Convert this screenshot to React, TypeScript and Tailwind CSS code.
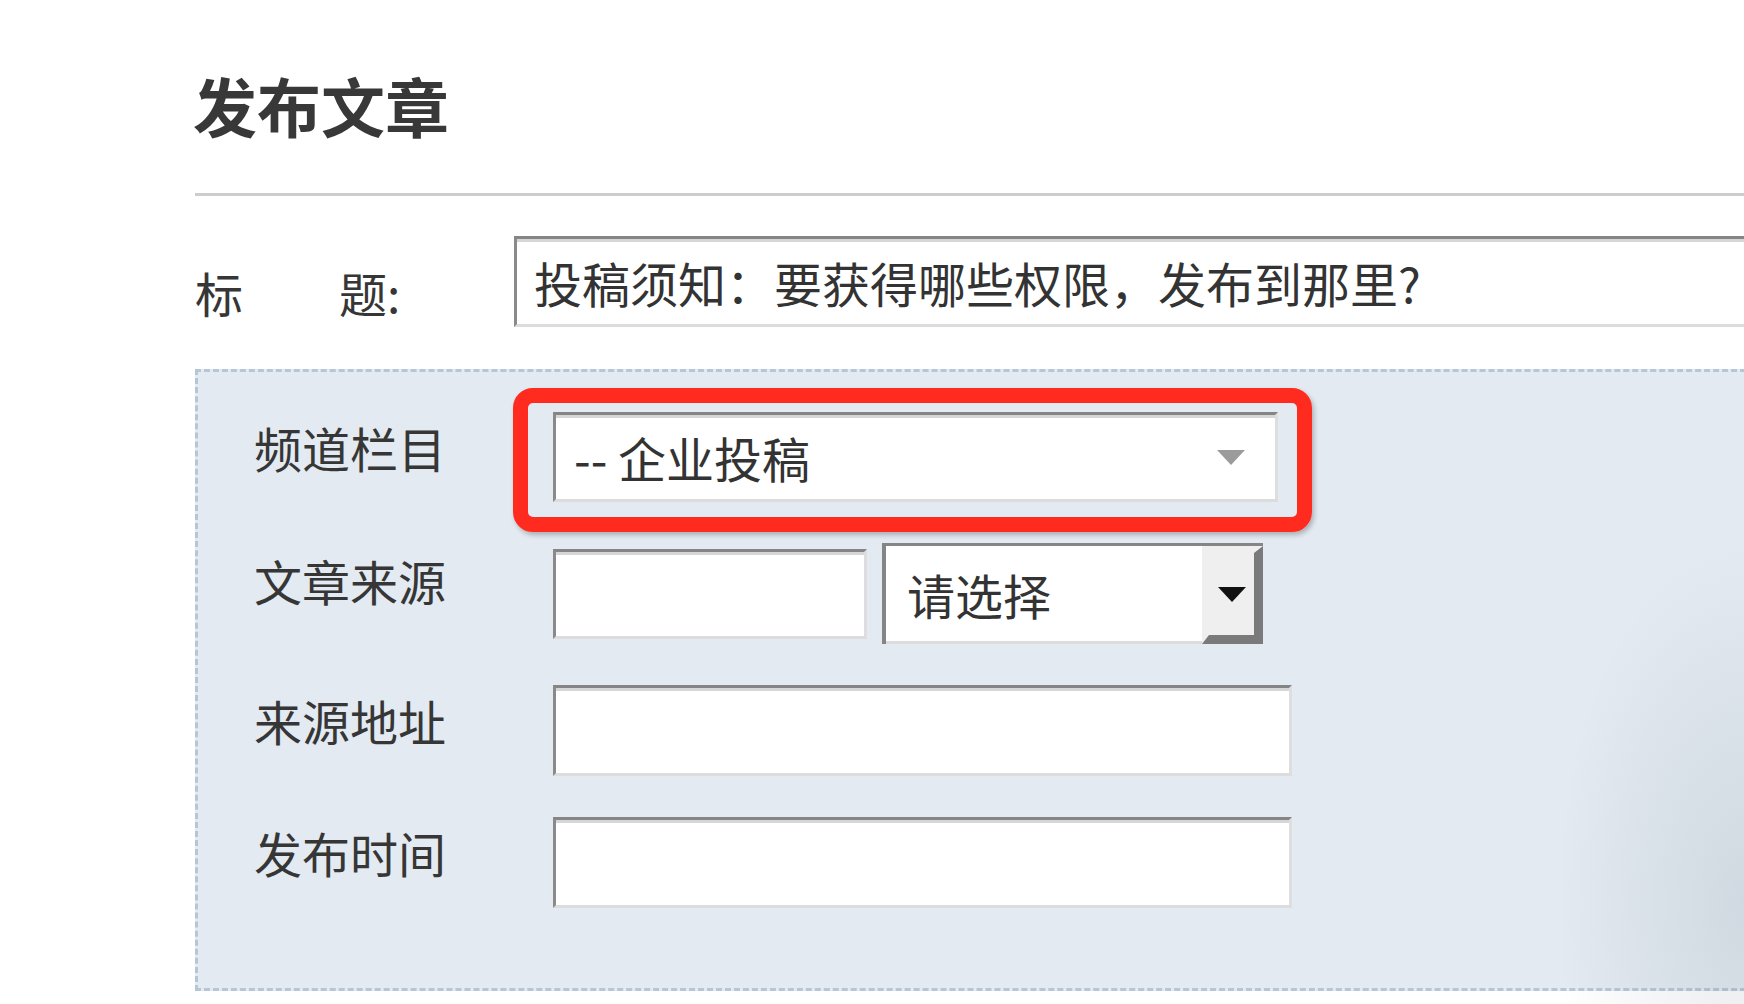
import React from 'react';

const fieldBorder =
  'border-t-[3px] border-t-[#858585] border-l-[3px] border-l-[#8a8a8a] border-r-[3px] border-r-[#dedede] border-b-[3px] border-b-[#dcdcdc] shadow-[inset_0_3px_0_#d6d6d6] bg-white';

function TextField({ className = '', children }: { className?: string; children?: React.ReactNode }) {
  return (
    <div className={`flex items-center ${fieldBorder} ${className}`}>
      {children}
    </div>
  );
}

function Label({ children, className = '' }: { children: React.ReactNode; className?: string }) {
  return (
    <div className={`text-[48px] leading-none text-[#363636] whitespace-nowrap ${className}`}>
      {children}
    </div>
  );
}

export default function App() {
  return (
    <div className="relative w-[1744px] h-[1004px] overflow-hidden bg-white font-['Noto_Sans_CJK_SC',sans-serif]">
      <div className="flex flex-col pl-[195px] pt-[72px]">
        {/* Heading */}
        <h1 className="text-[64px] leading-none font-bold text-[#383838] -ml-[2px]">发布文章</h1>
        <div className="mt-[57px] h-[3px] bg-[#cdcdcd]" />

        {/* Title row */}
        <div className="mt-[40px] flex items-start">
          <Label className="w-[319px] shrink-0 mt-[32px]">标　　题:</Label>
          <TextField className="flex-1 h-[91px] -mr-[20px] pl-[17px]">
            <span className="text-[48px] leading-none text-[#333]">投稿须知：要获得哪些权限，发布到那里?</span>
          </TextField>
        </div>

        {/* Dashed panel */}
        <div className="mt-[42px] -mr-[20px] border-[3px] border-dashed border-[#b6c6d6] bg-[#e3eaf1] pt-[40px] pb-[80px] pl-[56px] flex flex-col gap-[41px]">
          <div className="flex items-start">
            <Label className="w-[299px] shrink-0 mt-[11px]">频道栏目</Label>
            <div className="relative">
              <TextField className="w-[725px] h-[90px] pl-[18px] justify-between pr-[30px]">
                <span className="text-[48px] leading-none text-[#333]">-- 企业投稿</span>
                <svg width="28" height="15" viewBox="0 0 28 15">
                  <path d="M0 0 H28 L14 15 Z" fill="#9b9b9b" />
                </svg>
              </TextField>
              {/* annotation */}
              <div className="absolute -left-[40px] -top-[24px] w-[799px] h-[144px] rounded-[20px] border-[15px] border-[#ff2b1e] shadow-[2px_3px_5px_rgba(0,0,0,0.25)] pointer-events-none" />
            </div>
          </div>

          <div className="flex items-start">
            <Label className="w-[299px] shrink-0 mt-[13px]">文章来源</Label>
            <div className="flex items-center gap-[15px] h-[101px]">
              <TextField className="w-[314px] h-[90px]" />
              <div className="flex w-[381px] h-[101px] bg-white border-t-[3px] border-t-[#858585] border-l-[4px] border-l-[#858585]">
                <div className="flex-1 flex items-center pl-[21px] border-b-[3px] border-b-[#dcdcdc]">
                  <span className="text-[48px] leading-none text-[#333]">请选择</span>
                </div>
                <div className="w-[61px] flex items-center justify-center bg-[#efefef] border-l-[7px] border-l-[#efefef] border-t-[7px] border-t-[#efefef] border-r-[9px] border-r-[#7a7a7a] border-b-[9px] border-b-[#7a7a7a]">
                  <svg width="28" height="15" viewBox="0 0 28 15" className="shrink-0">
                    <path d="M0 0 H28 L14 15 Z" fill="#111" />
                  </svg>
                </div>
              </div>
            </div>
          </div>

          <div className="flex items-start">
            <Label className="w-[299px] shrink-0 mt-[11px]">来源地址</Label>
            <TextField className="w-[739px] h-[91px]" />
          </div>

          <div className="flex items-start">
            <Label className="w-[299px] shrink-0 mt-[11px]">发布时间</Label>
            <TextField className="w-[739px] h-[91px]" />
          </div>
        </div>
      </div>

      {/* soft shadow at the lower right corner */}
      <div className="pointer-events-none absolute right-0 bottom-0 w-[190px] h-[460px] bg-[radial-gradient(ellipse_at_100%_78%,rgba(110,125,140,0.16),transparent_70%)]" />
    </div>
  );
}
